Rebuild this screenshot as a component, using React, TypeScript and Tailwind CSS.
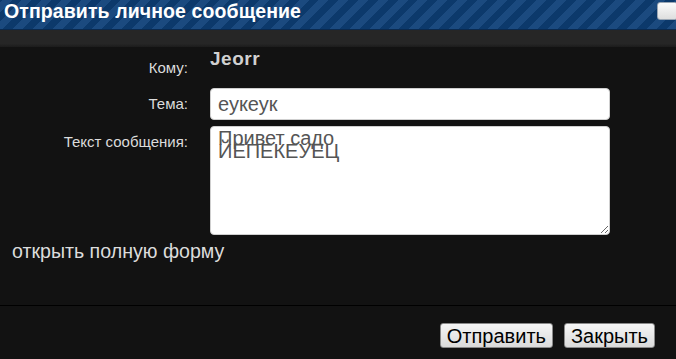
export default function App() {
  return (
    <div className="w-[676px] h-[359px] overflow-hidden bg-[#121212] flex flex-col font-['Liberation_Sans',Arial,sans-serif]">
      <header className="h-[30px] shrink-0 flex items-start justify-between border-b border-[#0a2a50] bg-[repeating-linear-gradient(-45deg,#1b4a7f_0px,#1b4a7f_7px,#0c396b_7px,#0c396b_14px)]">
        <h1 className="pl-[4px] pt-[1px] text-[19.5px] leading-[20px] font-bold tracking-[0.1px] text-white">
          Отправить личное сообщение
        </h1>
        <button className="mt-[2px] -mr-[2px] w-[21px] h-[18px] rounded-[3px] border border-[#9aa6b4] bg-[linear-gradient(#fbfbfb,#dedede)]" />
      </header>

      <div className="h-[17px] shrink-0 bg-[linear-gradient(#262626,#262626_80%,#1c1c1c)]" />

      <div className="flex">
        <div className="w-[188px] pt-[13px] text-right text-[15px] leading-[16px] text-[#dcdcdc]">
          Кому:
        </div>
        <div className="ml-[22px] mt-[1px] h-[40px] text-[19px] leading-[22px] font-bold tracking-[0.5px] text-[#d0d0d0]">
          Jeorr
        </div>
      </div>

      <div className="flex items-center">
        <div className="w-[188px] text-right text-[15px] leading-[16px] text-[#dcdcdc]">
          Тема:
        </div>
        <input
          readOnly
          defaultValue="еукеук"
          className="ml-[22px] w-[400px] h-[32px] rounded-[4px] border border-[#cfcfcf] bg-white px-[7px] text-[20px] text-[#555] outline-none font-['Liberation_Sans',Arial,sans-serif]"
        />
      </div>

      <div className="flex mt-[6px]">
        <div className="w-[188px] pt-[8px] text-right text-[15px] leading-[16px] text-[#dcdcdc]">
          Текст сообщения:
        </div>
        <textarea
          readOnly
          defaultValue={"Привет садо\nЙЕПЕКЕУЕЦ"}
          className="ml-[22px] w-[400px] h-[109px] rounded-[4px] border border-[#cfcfcf] bg-white px-[7px] pt-[5px] text-[20px] leading-[13px] text-[#555] outline-none font-['Liberation_Sans',Arial,sans-serif]"
        />
      </div>

      <div className="mt-[5px] pl-[12px] text-[19.6px] leading-[22px] text-[#dcdcdc]">
        открыть полную форму
      </div>

      <div className="flex-1" />

      <footer className="h-[54px] shrink-0 border-t border-black flex items-start justify-end gap-[11px] pt-[17px] pr-[21px]">
        <button className="h-[25px] px-[6px] rounded-[3px] border border-[#8a8a8a] bg-[linear-gradient(#f6f6f6,#dadada)] text-[20px] leading-[20px] text-black">
          Отправить
        </button>
        <button className="h-[25px] px-[6px] rounded-[3px] border border-[#8a8a8a] bg-[linear-gradient(#f6f6f6,#dadada)] text-[20px] leading-[20px] text-black">
          Закрыть
        </button>
      </footer>
    </div>
  );
}
